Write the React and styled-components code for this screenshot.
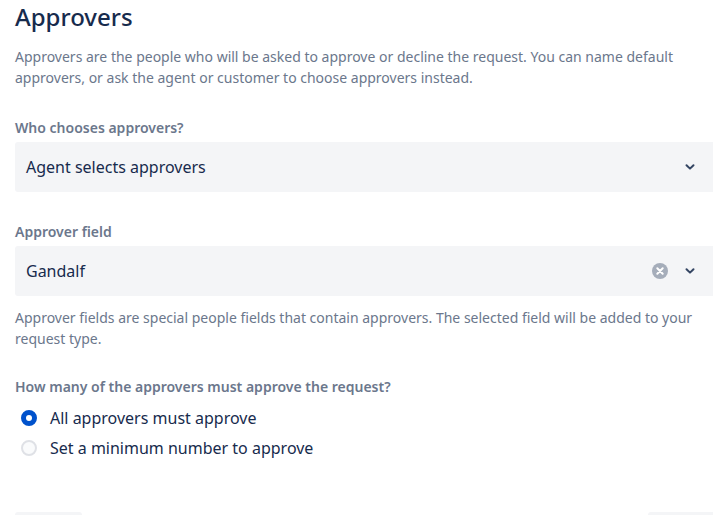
import React from "react";
import styled, { createGlobalStyle } from "styled-components";

const Global = createGlobalStyle`
  html, body { margin: 0; padding: 0; background: #fff; overflow: hidden; }
  body { font-family: "Noto Sans", "Open Sans", sans-serif; color: #172B4D; }
`;

const Page = styled.div`
  width: 720px;
  padding: 0 0 0 15px;
  box-sizing: border-box;
`;

const Title = styled.h2`
  margin: 3px 0 0;
  font-size: 24px;
  line-height: 28px;
  font-weight: 500;
  color: #172B4D;
`;

const Text = styled.p`
  margin: ${(p) => p.$mt || 0}px 0 0;
  font-size: 14px;
  line-height: 21px;
  color: #6B778C;
`;

const Field = styled.div`
  margin-top: ${(p) => p.$mt}px;
  display: flex;
  flex-direction: column;
`;

const Label = styled.label`
  font-size: 14px;
  line-height: 20px;
  font-weight: 600;
  color: #6B778C;
  margin-bottom: 4px;
`;

const Select = styled.div`
  height: 50px;
  background: #F4F5F7;
  border-radius: 3px;
  display: flex;
  align-items: center;
  padding: 0 24px 0 11px;
  box-sizing: border-box;
  width: 705px;
`;

const Value = styled.span`
  flex: 1;
  font-size: 16px;
  color: #172B4D;
`;

const Icons = styled.div`
  display: flex;
  align-items: center;
  gap: 16px;
`;

const Chevron = () => (
  <svg width="12" height="12" viewBox="0 0 12 12">
    <path d="M2.5 4.2 L6 7.6 L9.5 4.2" fill="none" stroke="#344563" strokeWidth="2" strokeLinecap="round" strokeLinejoin="round" />
  </svg>
);

const Clear = () => (
  <svg width="16" height="16" viewBox="0 0 16 16">
    <circle cx="8" cy="8" r="8" fill="#A5ADBA" />
    <path d="M5.3 5.3 L10.7 10.7 M10.7 5.3 L5.3 10.7" stroke="#fff" strokeWidth="2" strokeLinecap="round" />
  </svg>
);

const RadioGroup = styled.div`
  display: flex;
  flex-direction: column;
  gap: 6px;
  margin-top: 5px;
`;

const RadioRow = styled.label`
  display: flex;
  align-items: center;
  gap: 13px;
  height: 24px;
  padding-left: 6px;
  font-size: 16px;
  color: #172B4D;
`;

const RadioDot = styled.span`
  width: 16px;
  height: 16px;
  border-radius: 50%;
  box-sizing: border-box;
  background: ${(p) => (p.$on ? "#0052CC" : "#FAFBFC")};
  border: 2px solid ${(p) => (p.$on ? "#0052CC" : "#DFE1E6")};
  display: flex;
  align-items: center;
  justify-content: center;
  &::after {
    content: "";
    width: 6px;
    height: 6px;
    border-radius: 50%;
    background: #fff;
    display: ${(p) => (p.$on ? "block" : "none")};
  }
`;

const Footer = styled.div`
  margin-top: 52px;
  display: flex;
  justify-content: space-between;
  width: 700px;
`;

const Button = styled.button`
  height: 32px;
  width: ${(p) => p.$w}px;
  border: none;
  border-radius: 3px;
  background: #F4F5F7;
`;

export default function App() {
  return (
    <>
      <Global />
      <Page>
        <Title>Approvers</Title>
        <Text $mt={15}>
          Approvers are the people who will be asked to approve or decline the request. You can name default approvers, or ask the agent or customer to choose approvers instead.
        </Text>
        <Field $mt={30}>
          <Label>Who chooses approvers?</Label>
          <Select>
            <Value>Agent selects approvers</Value>
            <Icons>
              <Chevron />
            </Icons>
          </Select>
        </Field>
        <Field $mt={30}>
          <Label>Approver field</Label>
          <Select>
            <Value>Gandalf</Value>
            <Icons>
              <Clear />
              <Chevron />
            </Icons>
          </Select>
        </Field>
        <Text $mt={11}>
          Approver fields are special people fields that contain approvers. The selected field will be added to your request type.
        </Text>
        <Field $mt={28}>
          <Label>How many of the approvers must approve the request?</Label>
          <RadioGroup>
            <RadioRow>
              <RadioDot $on />
              All approvers must approve
            </RadioRow>
            <RadioRow>
              <RadioDot />
              Set a minimum number to approve
            </RadioRow>
          </RadioGroup>
        </Field>
        <Footer>
          <Button $w={67} />
          <Button $w={67} />
        </Footer>
      </Page>
    </>
  );
}
